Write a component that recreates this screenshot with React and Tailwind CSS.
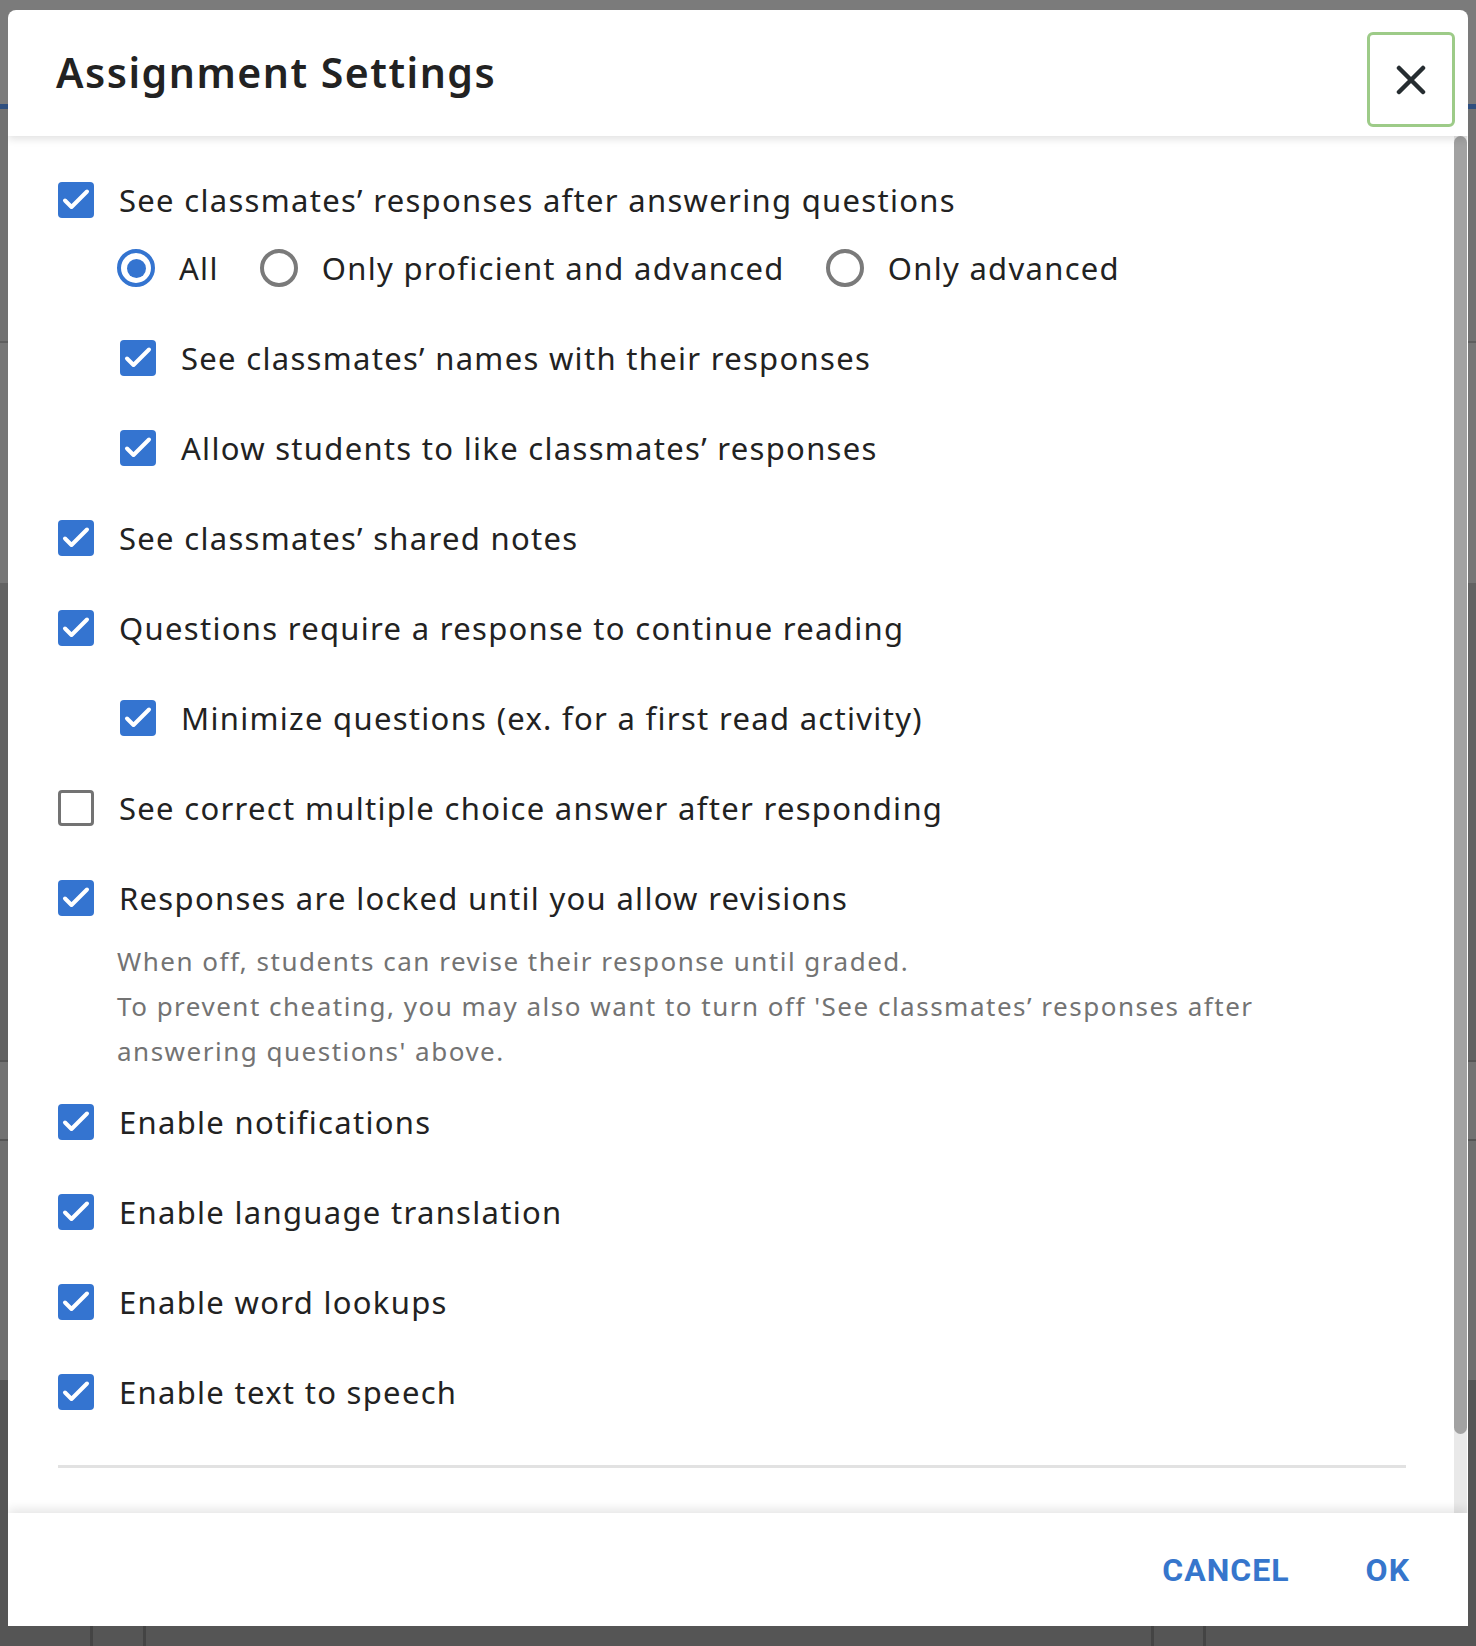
import React from 'react';

function Box({ checked }) {
  if (!checked) {
    return <span className="h-[36px] w-[36px] shrink-0 rounded-[4px] border-[3px] border-[#737373] bg-white" />;
  }
  return (
    <span className="flex h-[36px] w-[36px] shrink-0 items-center justify-center rounded-[4px] bg-[#3474d0]">
      <svg viewBox="0 0 36 36" className="h-[36px] w-[36px]">
        <polyline
          points="7,18.5 13.5,25 29,9.5"
          fill="none"
          stroke="white"
          strokeWidth="4"
          strokeLinecap="round"
          strokeLinejoin="round"
        />
      </svg>
    </span>
  );
}

function Row({ checked = true, label, sub }) {
  return (
    <div className={sub ? 'flex h-[90px] items-center gap-[25px] pl-[62px]' : 'flex h-[90px] items-center gap-[25px]'}>
      <Box checked={checked} />
      <span className="text-[31px] tracking-[1.3px] text-[#222]">{label}</span>
    </div>
  );
}

function Radio({ selected, label }) {
  return (
    <div className="flex items-center gap-[24px]">
      {selected ? (
        <span className="flex h-[38px] w-[38px] items-center justify-center rounded-full border-[4px] border-[#3474d0]">
          <span className="h-[19px] w-[19px] rounded-full bg-[#3474d0]" />
        </span>
      ) : (
        <span className="h-[38px] w-[38px] rounded-full border-[4px] border-[#7a7a7a]" />
      )}
      <span className="text-[31px] tracking-[1.3px] text-[#222]">{label}</span>
    </div>
  );
}

export default function App() {
  return (
    <div className="relative h-[1646px] w-[1476px] overflow-hidden bg-[#6a6a6a] font-['Noto_Sans',sans-serif]">
      {/* dimmed page behind the dialog */}
      <div className="flex flex-col">
        <div className="h-[104px] bg-[#7b7b7b]" />
        <div className="h-[5px] bg-[#2f4f7f]" />
        <div className="h-[232px] bg-[#717171]" />
        <div className="h-[2px] bg-[#5e5e5e]" />
        <div className="h-[240px] bg-[#767676]" />
        <div className="h-[477px] bg-[#626262]" />
        <div className="h-[2px] bg-[#555]" />
        <div className="h-[77px] bg-[#727272]" />
        <div className="h-[2px] bg-[#555]" />
        <div className="h-[239px] bg-[#6e6e6e]" />
        <div className="flex h-[266px] bg-[#555]">
          <div className="w-[90px]" />
          <div className="w-[3px] bg-[#444]" />
          <div className="w-[50px]" />
          <div className="w-[3px] bg-[#444]" />
          <div className="w-[1005px]" />
          <div className="w-[3px] bg-[#444]" />
          <div className="w-[49px]" />
          <div className="w-[3px] bg-[#444]" />
        </div>
      </div>

      <div className="absolute left-[8px] top-[10px] flex h-[1616px] w-[1460px] flex-col overflow-hidden rounded-t-[8px] bg-white">
        <header className="relative z-10 flex h-[126px] shrink-0 justify-between pl-[48px] pr-[13px] shadow-[0_3px_8px_rgba(0,0,0,0.12)]">
          <h1 className="self-center text-[41px] font-semibold tracking-[1.5px] text-[#222]">Assignment Settings</h1>
          <button className="mb-[9px] flex h-[95px] w-[88px] items-center justify-center self-end rounded-[6px] border-[3px] border-[#9dcb88] bg-white">
            <svg viewBox="0 0 30 30" className="h-[30px] w-[30px]">
              <path d="M3 3 L27 27 M27 3 L3 27" stroke="#262d31" strokeWidth="4.5" strokeLinecap="round" fill="none" />
            </svg>
          </button>
        </header>

        <div className="flex min-h-0 flex-1">
          <div className="flex-1 pl-[50px] pr-[48px] pt-[19px]">
            <Row label="See classmates’ responses after answering questions" />
            <div className="flex h-[46px] items-center gap-[41px] pl-[59px]">
              <Radio selected label="All" />
              <Radio label="Only proficient and advanced" />
              <Radio label="Only advanced" />
            </div>
            <div className="mt-[22px]">
              <Row sub label="See classmates’ names with their responses" />
              <Row sub label="Allow students to like classmates’ responses" />
              <Row label="See classmates’ shared notes" />
              <Row label="Questions require a response to continue reading" />
              <Row sub label="Minimize questions (ex. for a first read activity)" />
              <Row checked={false} label="See correct multiple choice answer after responding" />
              <Row label="Responses are locked until you allow revisions" />
            </div>
            <p className="-mt-[4px] pl-[59px] pr-[100px] text-[26px] leading-[45px] tracking-[1.5px] text-[#737373]">
              When off, students can revise their response until graded.
              <br />
              To prevent cheating, you may also want to turn off 'See classmates’ responses after answering questions' above.
            </p>
            <div className="mt-[3px]">
              <Row label="Enable notifications" />
              <Row label="Enable language translation" />
              <Row label="Enable word lookups" />
              <Row label="Enable text to speech" />
            </div>
            <div className="mt-[28px] h-[3px] bg-[#e2e2e2]" />
          </div>
          <div className="mr-[1px] flex w-[13px] flex-col bg-[#e9e9e9]">
            <div className="h-[1298px] rounded-full bg-[#a2a2a2]" />
          </div>
        </div>

        <footer className="relative z-10 flex h-[113px] shrink-0 items-center justify-end gap-[76px] bg-white pr-[58px] font-['Roboto',sans-serif] shadow-[0_-4px_10px_rgba(0,0,0,0.1)]">
          <button className="text-[32px] font-bold tracking-[1px] text-[#3676cc]">CANCEL</button>
          <button className="text-[32px] font-bold tracking-[1px] text-[#3676cc]">OK</button>
        </footer>
      </div>
    </div>
  );
}
